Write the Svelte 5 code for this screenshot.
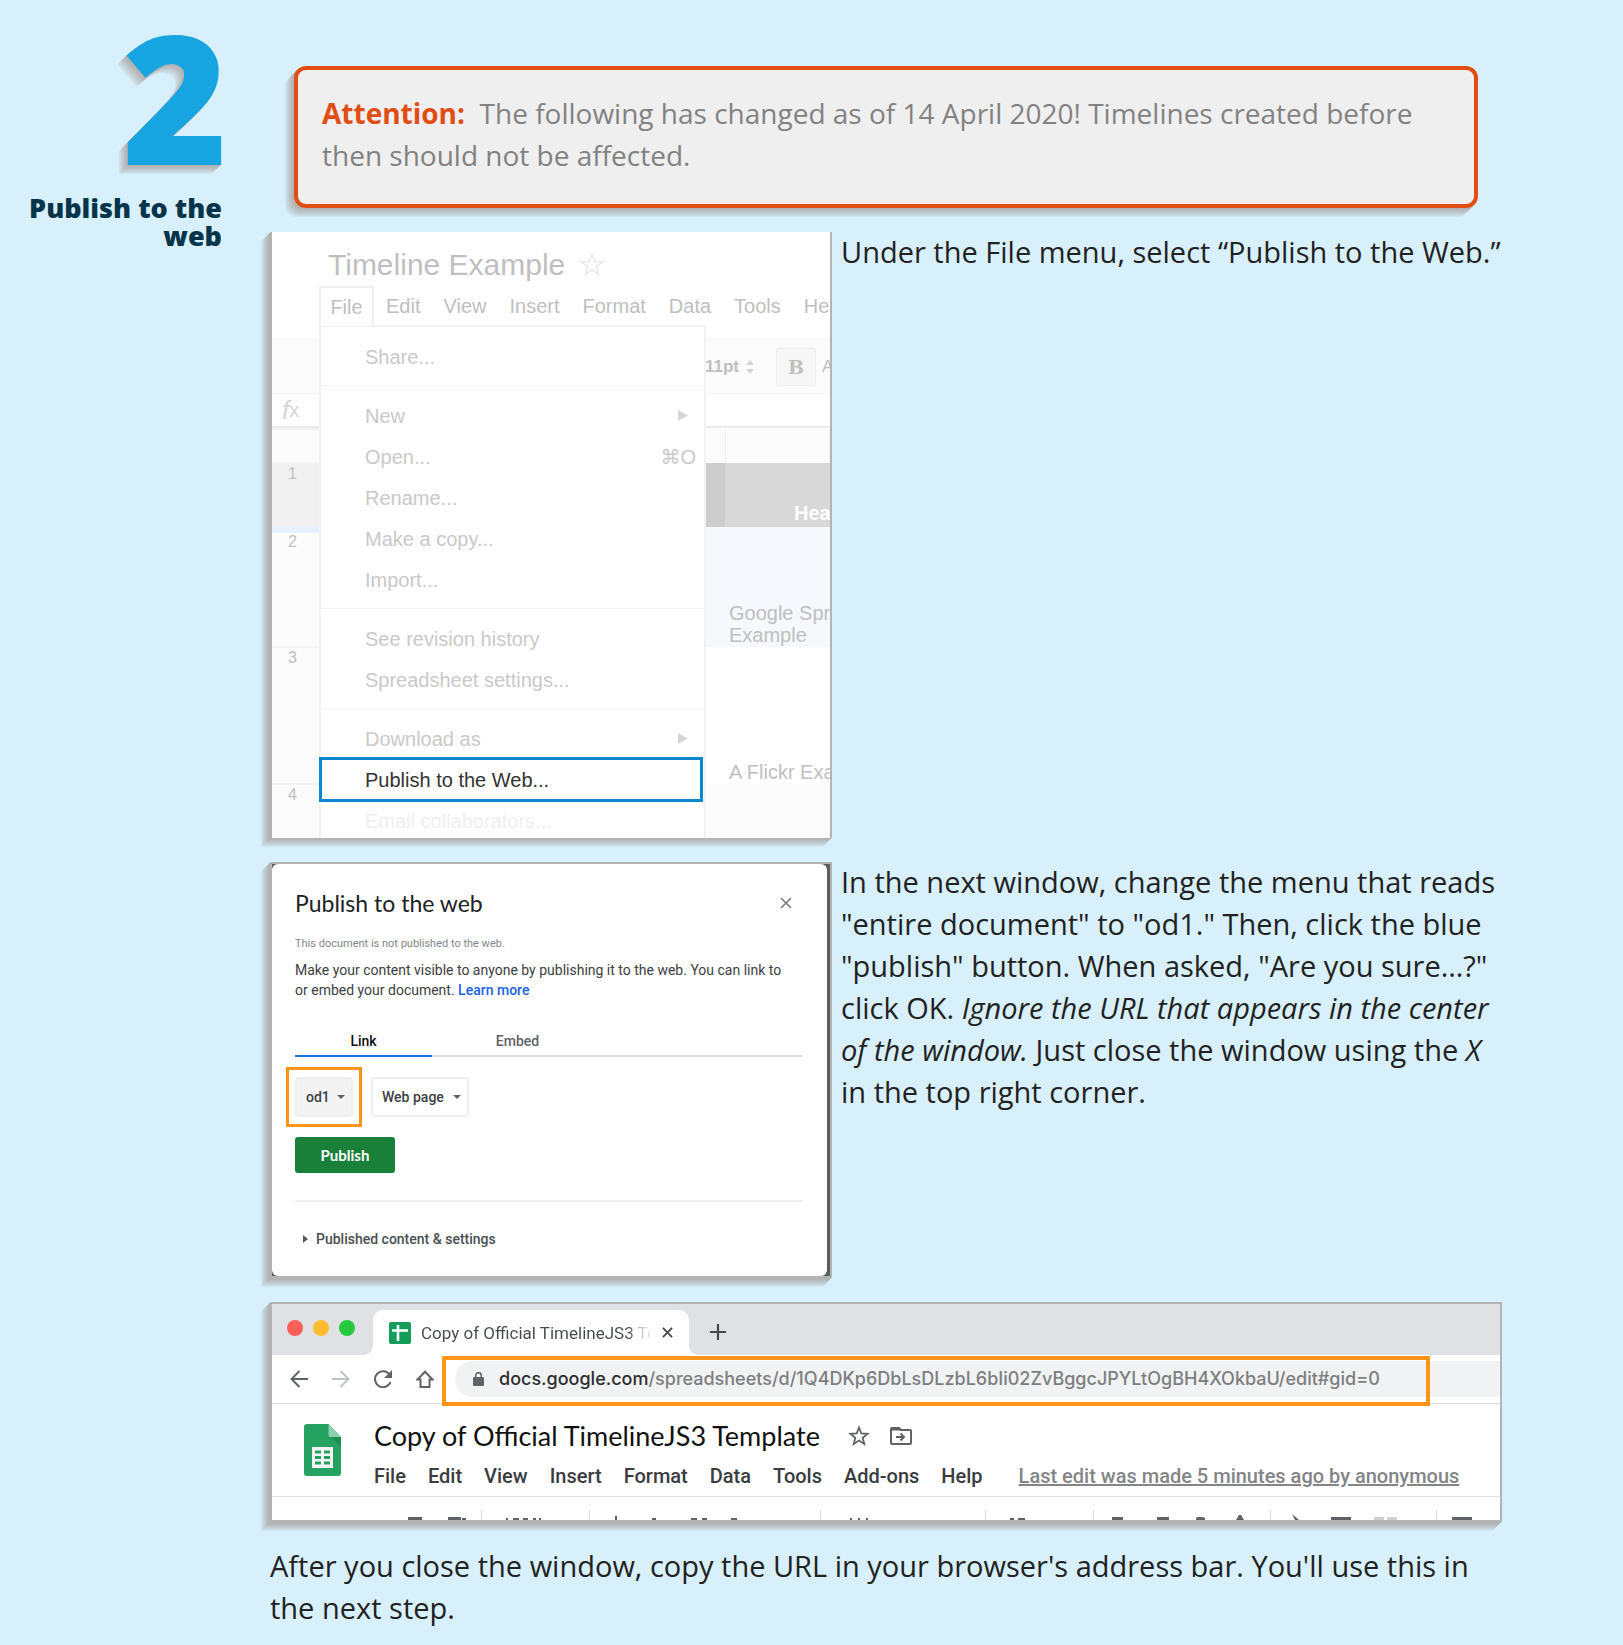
<script>
  const sheetMenus = ['Edit', 'View', 'Insert', 'Format', 'Data', 'Tools', 'Help'];
  const fileMenu = [
    [{ label: 'Share...' }],
    [
      { label: 'New', sub: true },
      { label: 'Open...', key: '⌘O' },
      { label: 'Rename...' },
      { label: 'Make a copy...' },
      { label: 'Import...' }
    ],
    [{ label: 'See revision history' }, { label: 'Spreadsheet settings...' }],
    [
      { label: 'Download as', sub: true },
      { label: 'Publish to the Web...', active: true },
      { label: 'Email collaborators...', faint: true }
    ]
  ];
  const docMenus = ['File', 'Edit', 'View', 'Insert', 'Format', 'Data', 'Tools', 'Add-ons', 'Help'];
</script>

<main class="page">
  <aside class="step">
    <div class="number">2</div>
    <h2>Publish to the web</h2>
  </aside>

  <div class="content">
    <div class="alert" role="note">
      <p><strong>Attention:</strong>&nbsp; The following has changed as of 14 April 2020! Timelines created before then should not be affected.</p>
    </div>

    <section class="row">
      <figure class="shot sheet">
        <div class="sheet-title">
          <span>Timeline Example</span>
          <svg class="star" viewBox="0 0 24 24"><path d="M12 2l2.600 7h7.200l-5.800 4.500 2.100 7.300L12 16.500l-6.100 4.300L8 13.500 2.200 9h7.200z" fill="none" stroke="#e9e9e9" stroke-width="1.500" /></svg>
        </div>
        <nav class="sheet-menus">
          <button class="file-tab">File</button>
          {#each sheetMenus as m}<button>{m}</button>{/each}
        </nav>
        <div class="format-bar">
          <span class="pt">11pt</span>
          <svg class="updown" viewBox="0 0 8 14"><path d="M0 5l4-5 4 5zM0 9l4 5 4-5z" fill="#d4d4d4" /></svg>
          <span class="bar"></span>
          <button class="bold">B</button>
          <span class="letter">A</span>
        </div>
        <div class="formula"><i>f</i><span>x</span></div>
        <table class="cells">
          <tbody>
            <tr class="head"><th></th><td class="slim"></td><td></td></tr>
            <tr class="r1"><th>1</th><td class="slim"></td><td>Headline</td></tr>
            <tr class="r2"><th>2</th><td class="slim"></td><td><div>Google Spreadsheet<br />Example</div></td></tr>
            <tr class="r3"><th>3</th><td class="slim"></td><td><div>A Flickr Example</div></td></tr>
            <tr class="r4"><th>4</th><td class="slim"></td><td></td></tr>
          </tbody>
        </table>
        <div class="dropdown">
          {#each fileMenu as group}
            <div class="group">
              {#each group as item}
                <button class="item" class:active={item.active} class:faint={item.faint}>
                  <span>{item.label}</span>
                  {#if item.key}<span class="key">{item.key}</span>{/if}
                  {#if item.sub}<svg class="sub" viewBox="0 0 10 11"><path d="M0 0l10 5.500L0 11z" fill="#d6d6d6" /></svg>{/if}
                </button>
              {/each}
            </div>
          {/each}
        </div>
      </figure>
      <p class="copy">Under the File menu, select “Publish to the Web.”</p>
    </section>

    <section class="row">
      <figure class="shot framed publish">
        <div class="dialog">
          <header>
            <h3>Publish to the web</h3>
            <button class="close" aria-label="Close"><svg viewBox="0 0 12 12"><path d="M1 1l10 10M11 1L1 11" stroke="#777b80" stroke-width="1.600" /></svg></button>
          </header>
          <p class="status">This document is not published to the web.</p>
          <p class="about">Make your content visible to anyone by publishing it to the web. You can link to or embed your document. <a href="#learn">Learn more</a></p>
          <div class="tabs"><button class="on">Link</button><button>Embed</button></div>
          <div class="choices">
            <label class="pick grey"><select aria-label="Content"><option>od1</option></select></label>
            <label class="pick"><select aria-label="Format"><option>Web page</option></select></label>
          </div>
          <button class="go">Publish</button>
          <button class="more"><svg viewBox="0 0 5 8"><path d="M0 0l5 4-5 4z" fill="#55595e" /></svg>Published content &amp; settings</button>
        </div>
      </figure>
      <p class="copy">In the next window, change the menu that reads "entire document" to "od1." Then, click the blue "publish" button. When asked, "Are you sure…?" click OK. <em>Ignore the URL that appears in the center of the window.</em> Just close the window using the <em>X</em> in the top right corner.</p>
    </section>

    <figure class="shot framed browser">
      <div class="strip">
        <span class="dots"><i class="red"></i><i class="amber"></i><i class="green"></i></span>
        <div class="tab">
          <svg class="fav" viewBox="0 0 22 22"><rect width="22" height="22" rx="2" fill="#129d58" /><path d="M3 8.500h16M9 3v16" stroke="#fff" stroke-width="2.600" /></svg>
          <span class="tab-name">Copy of Official TimelineJS3 Template</span>
          <svg class="x" viewBox="0 0 12 12"><path d="M1 1l10 10M11 1L1 11" stroke="#45494d" stroke-width="2" /></svg>
        </div>
        <svg class="plus" viewBox="0 0 16 16"><path d="M8 0v16M0 8h16" stroke="#45494d" stroke-width="2.200" /></svg>
      </div>
      <div class="address">
        <svg class="nav" viewBox="0 0 18 18"><path d="M18 9H2M9.500 1L1.500 9l8 8" fill="none" stroke="#5f6368" stroke-width="2" /></svg>
        <svg class="nav" viewBox="0 0 18 18"><path d="M0 9h16M8.500 1l8 8-8 8" fill="none" stroke="#bfc2c6" stroke-width="2" /></svg>
        <svg class="nav" viewBox="0 0 18 18"><path d="M15.500 4.500A8 8 0 1 0 16.500 12" fill="none" stroke="#5f6368" stroke-width="2" /><path d="M18 0v8h-8z" fill="#5f6368" /></svg>
        <svg class="nav" viewBox="0 0 18 18"><path d="M1.500 9.500L9 1.800l7.500 7.700h-3V17h-9V9.500z" fill="none" stroke="#5f6368" stroke-width="2" /></svg>
        <div class="omnibox">
          <svg class="lock" viewBox="0 0 11 14"><rect y="5" width="11" height="9" rx="1" fill="#5f6368" /><path d="M2.700 6V3.500a2.800 2.800 0 0 1 5.600 0V6" fill="none" stroke="#5f6368" stroke-width="1.500" /></svg>
          <span class="url"><b>docs.google.com</b>/spreadsheets/d/1Q4DKp6DbLsDLzbL6bIi02ZvBggcJPYLtOgBH4XOkbaU/edit#gid=0</span>
        </div>
        <div class="mark"></div>
      </div>
      <div class="doc">
        <svg class="logo" viewBox="0 0 37 52">
          <path d="M3 0h21.500L37 13v36a3 3 0 0 1-3 3H3a3 3 0 0 1-3-3V3a3 3 0 0 1 3-3z" fill="#25a162" />
          <path d="M24.500 0L37 13H27a2.500 2.500 0 0 1-2.500-2.500z" fill="#8dd0ae" />
          <path d="M27 13h10v10z" fill="#1b8d52" />
          <rect x="8" y="23" width="21" height="21" fill="#f4f4f4" />
          <path d="M11 26.500h6v3h-6zM20 26.500h6v3h-6zM11 32h6v3h-6zM20 32h6v3h-6zM11 37.500h6v3h-6zM20 37.500h6v3h-6z" fill="#25a162" />
        </svg>
        <div class="doc-main">
          <div class="doc-title">
            <span>Copy of Official TimelineJS3 Template</span>
            <svg class="fstar" viewBox="0 0 22 22"><path d="M11 2.500l2.300 5.900 6.300.4-4.900 4 1.600 6.200-5.300-3.500L5.700 19l1.600-6.200-4.900-4 6.300-.4z" fill="none" stroke="#5f6368" stroke-width="1.800" /></svg>
            <svg class="folder" viewBox="0 0 22 18"><path d="M1 2v14a1 1 0 0 0 1 1h18a1 1 0 0 0 1-1V4a1 1 0 0 0-1-1h-9L9 1H2a1 1 0 0 0-1 1z" fill="none" stroke="#5f6368" stroke-width="2" /><path d="M1 1h8l2 2.500H1z" fill="#5f6368" /><path d="M6 10h8M10.500 6.500L14 10l-3.500 3.500" fill="none" stroke="#5f6368" stroke-width="2" /></svg>
          </div>
          <nav class="doc-menus">
            {#each docMenus as m}<button>{m}</button>{/each}
            <a href="#history">Last edit was made 5 minutes ago by anonymous</a>
          </nav>
        </div>
      </div>
      <svg class="tools" viewBox="0 0 1228 23" preserveAspectRatio="xMinYMin slice">
        <path d="M209.500 13v10M317.500 13v10M548.500 13v10M713.500 13v10M821.500 13v10M998.500 13v10M1164.500 13v10" stroke="#dadce0" />
        <path d="M136 20h14v3h-14zM176 20h13v3h-13zM190 21h4v2h-4zM343 19h2v4h-2zM840 20h11v3h-11zM885 20h12v3h-12zM924 21l2-1h5l2 1v2h-9zM964 23l3-5h2l3 5zM1020 17l7 6h-4zM1059 20h20v3h-20zM1180 20h20v3h-20z" fill="#5f6368" />
        <path d="M234 21h2v2h-2zM241 21h6v2h-6zM251 21h5v2h-5zM261 21h3v2h-3zM267 21h2v2h-2zM380 21h4v2h-4zM419 21h6v2h-6zM430 21h5v2h-5zM459 21h6v2h-6zM578 21h2v2h-2zM586 21h2v2h-2zM594 21h2v2h-2zM738 21h4v2h-4zM746 21h7v2h-7z" fill="#5f6368" />
        <path d="M1102 20h10v3h-10zM1115 20h10v3h-10z" fill="#cfd0d2" />
      </svg>
    </figure>
    <p class="copy after">After you close the window, copy the URL in your browser's address bar. You'll use this in the next step.</p>
  </div>
</main>

<style>
  :global(body) {
    background: #d7f0fc;
    --drop: -1px 1px #b1b2b3, -2px 2px #b4b6b7, -3px 3px #b7bbbd, -4px 4px #bac0c3, -5px 5px #bec7cb, -6px 6px #c2ced4, -7px 7px #c6d5dc, -8px 8px #cbdde5, -9px 9px #cfe5ef;
  }
  * { box-sizing: border-box; }
  p, h2, h3, figure { margin: 0; }
  button, select {
    font: inherit;
    color: inherit;
    background: none;
    border: 0;
    padding: 0;
    margin: 0;
    white-space: nowrap;
  }
  svg { display: block; flex: none; }

  .page {
    display: grid;
    grid-template-columns: 222px minmax(0, 1fr);
    column-gap: 48px;
    padding: 0 121px 16px 0;
    font-family: "Open Sans", sans-serif;
    font-size: 29px;
    line-height: 42px;
    color: #222;
  }
  .step { text-align: right; color: #06344a; }
  .number {
    margin-right: -6px;
    font-size: 180px;
    line-height: 192px;
    font-weight: 800;
    color: #16a5e1;
    text-shadow: var(--drop);
  }
  h2 { margin-top: 2px; font-size: 27px; line-height: 28px; font-weight: 800; }

  .content { display: flex; flex-direction: column; gap: 24px; padding-top: 66px; }
  .alert {
    margin: 0 24px;
    padding: 22px 24px 28px;
    border: 4px solid #e04e14;
    border-radius: 12px;
    background: #efefef;
    color: #828282;
    font-size: 28px;
    box-shadow: var(--drop);
  }
  .alert strong { color: #e04e14; font-weight: 700; }
  .row { display: flex; align-items: flex-start; gap: 9px; }
  .copy { flex: 1; min-width: 0; margin-top: -1px; }

  .shot {
    position: relative;
    border: 0 solid #b4b4b4;
    border-width: 0 2px;
    background: #fff;
    box-shadow: var(--drop);
  }
  .framed { border-width: 2px; }
  .sheet, .publish { flex: 0 0 562px; overflow: hidden; }

  .sheet { font-family: "Liberation Sans", sans-serif; font-size: 20px; line-height: 22px; color: #bfbfbf; height: 606px; }
  .sheet-title { display: flex; align-items: center; gap: 14px; padding: 13px 0 0 56px; font-size: 30px; line-height: 40px; }
  .star { width: 26px; height: 26px; }
  .sheet-menus { display: flex; gap: 23px; margin-top: 1px; padding-left: 47px; height: 53px; }
  .sheet-menus button { height: 40px; flex: none; }
  .sheet-menus .file-tab {
    position: relative;
    z-index: 2;
    width: 55px;
    margin-right: -11px;
    border: 2px solid #f0f0f0;
    border-bottom: 0;
    background: #fff;
  }
  .format-bar {
    display: flex;
    align-items: center;
    height: 55px;
    padding-left: 433px;
    background: #fbfbfb;
    border: solid #f4f4f4;
    border-width: 1px 0;
    font-size: 17px;
  }
  .pt { font-weight: 700; }
  .updown { width: 8px; height: 14px; margin-left: 7px; }
  .bar { width: 1px; height: 22px; margin: 0 8px 0 14px; background: #eaeaea; }
  .bold { width: 40px; height: 38px; border: 1px solid #eee; border-radius: 2px; background: #f6f6f6; font: 900 19px "DejaVu Serif", serif; flex: none; }
  .letter { margin-left: 6px; }
  .formula { display: flex; align-items: center; height: 34px; padding-left: 10px; border-bottom: 2px solid #ebebeb; color: #d6d6d6; }
  .formula i { font-size: 26px; }
  .cells { width: 100%; border-collapse: collapse; table-layout: fixed; }
  .cells th { width: 47px; padding: 1px 6px 0 0; background: #fbfbfb; font-weight: 400; font-size: 16px; line-height: 18px; vertical-align: top; border-top: 2px solid #f2f2f2; }
  .cells td { padding: 0 0 1px; vertical-align: bottom; white-space: nowrap; overflow: hidden; }
  .cells td:last-child { padding-left: 4px; }
  .cells .slim { width: 406px; }
  .head td { background: #fbfbfb; border-right: 1px solid #eee; }
  .head { height: 34px; }
  .r1 { height: 64px; color: #fff; font-weight: 700; }
  .r1 th { background: #f0f0f0; color: #c4c4c4; }
  .r1 td { background: #d8d8d8; padding-bottom: 3px; }
  .r1 td:last-child { padding-left: 69px; }
  .r1 .slim { background: #cdcdcd; }
  .r2 { height: 120px; }
  .cells .r2 th { border-top: 0; padding-top: 6px; background: linear-gradient(#e8f0fe 6px, #fbfbfb 6px); }
  .r2 td { background: #f5f8fc; }
  .r3 { height: 137px; }
  .r4 { height: 55px; }
  .r4 td { background: #fbfbfb; }

  .dropdown {
    position: absolute;
    left: 47px;
    top: 93px;
    width: 387px;
    padding-top: 9px;
    border: 2px solid #f2f2f2;
    background: #fff;
    color: #c9c9c9;
  }
  .group + .group { margin-top: 8px; padding-top: 9px; border-top: 1px solid #f4f4f4; }
  .item { display: flex; align-items: center; width: 100%; height: 41px; padding: 0 8px 0 44px; text-align: left; }
  .item.active { outline: 3px solid #0a87cf; outline-offset: -1px; color: #333; width: 380px; }
  .item.faint { color: #efefef; }
  .key, .sub { margin-left: auto; }
  .key { font-family: "Liberation Sans", "DejaVu Sans", sans-serif; }
  .sub { width: 10px; height: 11px; margin-right: 8px; }

  .publish { background: #585d63; font-family: Roboto, sans-serif; font-size: 14px; line-height: 20px; color: #3c4043; }
  .dialog { height: 412px; margin-right: 3px; padding: 23px 24px 0 23px; border-radius: 6px; background: #fff; }
  .dialog header { display: flex; align-items: center; justify-content: space-between; padding-right: 11px; }
  h3 { font: 400 23px/32px Lato, sans-serif; color: #202124; }
  .close svg { width: 12px; height: 12px; }
  .status { margin-top: 15px; font-size: 11px; color: #80868b; }
  .about { margin-top: 6px; padding-right: 12px; }
  .about a { color: #1a63e0; text-decoration: none; font-weight: 500; }
  .tabs { display: flex; margin-top: 26px; border-bottom: 2px solid #dcdee1; color: #5f6368; font-weight: 500; }
  .tabs button { width: 171px; height: 29px; }
  .tabs .on { width: 137px; margin-bottom: -2px; height: 31px; border-bottom: 2px solid #1a73e8; color: #111; }
  .choices { display: flex; gap: 18px; margin-top: 20px; }
  .pick { position: relative; width: 98px; height: 40px; border: 2px solid #eceef0; border-radius: 4px; font-weight: 500; }
  .pick select { appearance: none; width: 100%; height: 100%; padding-left: 9px; }
  .pick::after { content: ""; position: absolute; right: 6px; top: 16px; border: 4px solid transparent; border-top-color: #5f6368; }
  .grey { width: 58px; background: #f3f3f3; }
  .grey::before { content: ""; position: absolute; inset: -12px -11px; border: 3px solid #ff941a; pointer-events: none; }
  .go { display: block; width: 100px; height: 36px; margin-top: 20px; border-radius: 3px; background: #188038; color: #fff; font: 700 15px Lato, sans-serif; }
  .more { display: flex; align-items: center; gap: 8px; width: 100%; margin-top: 27px; padding: 27px 0 0 8px; border-top: 2px solid #eceef0; font-weight: 500; color: #4a4e52; }
  .more svg { width: 5px; height: 8px; }

  .browser { height: 220px; overflow: hidden; font-family: Roboto, sans-serif; }
  .strip { display: flex; align-items: center; height: 51px; background: #dfe1e5; }
  .dots { display: flex; gap: 10px; padding: 0 18px 4px 15px; }
  .dots i { width: 16px; height: 16px; border-radius: 50%; }
  .red { background: #ff5f57; }
  .amber { background: #febc2e; }
  .green { background: #28c840; }
  .tab { position: relative; display: flex; align-items: center; align-self: flex-end; width: 316px; height: 45px; padding: 0 16px; border-radius: 10px 10px 0 0; background: #fff; }
  .tab::before, .tab::after { content: ""; position: absolute; bottom: 0; width: 10px; height: 10px; }
  .tab::before { left: -10px; background: radial-gradient(circle at 0 0, transparent 10px, #fff 10px); }
  .tab::after { right: -10px; background: radial-gradient(circle at 100% 0, transparent 10px, #fff 10px); }
  .fav { width: 22px; height: 22px; }
  .tab-name { width: 230px; margin: 0 12px 0 10px; overflow: hidden; white-space: nowrap; font-size: 17px; line-height: 24px; color: transparent; background: linear-gradient(90deg, #45494d 208px, #45494d66 216px, #45494d00 234px); background-clip: text; }
  .x { width: 11px; height: 11px; }
  .plus { width: 16px; height: 16px; margin: 4px 0 0 21px; }
  .address { position: relative; display: flex; align-items: center; gap: 24px; height: 49px; padding: 0 0 0 18px; border-bottom: 1px solid #dadce0; }
  .nav { width: 18px; height: 18px; }
  .omnibox { display: flex; align-items: center; flex: 1; min-width: 0; height: 36px; margin-left: -3px; padding-left: 18px; border-radius: 18px 0 0 18px; background: #f1f2f4; }
  .lock { width: 11px; height: 14px; margin-right: 15px; }
  .url { font: 500 18px/36px Inter, sans-serif; color: #7c7e80; white-space: nowrap; }
  .url b { font-weight: 500; color: #2c2d30; }
  .mark { position: absolute; left: 170px; top: 1px; width: 988px; height: 50px; border: 4px solid #ff941a; }
  .doc { display: flex; height: 93px; padding: 20px 0 0 32px; border-bottom: 1px solid #e0e2ea; }
  .logo { width: 37px; height: 52px; margin-right: 33px; }
  .doc-title { display: flex; align-items: center; height: 24px; font: 400 27px/24px Lato, sans-serif; color: #111; }
  .fstar { width: 22px; height: 22px; margin: 0 20px 0 28px; }
  .folder { width: 22px; height: 18px; }
  .doc-menus { display: flex; gap: 22px; margin-top: 16px; font-size: 20px; line-height: 24px; font-weight: 500; color: #3a3c3f; }
  .doc-menus a { margin-left: 14px; color: #838587; white-space: nowrap; }
  .tools { width: 100%; height: 23px; }
  .after { flex: none; }
</style>
